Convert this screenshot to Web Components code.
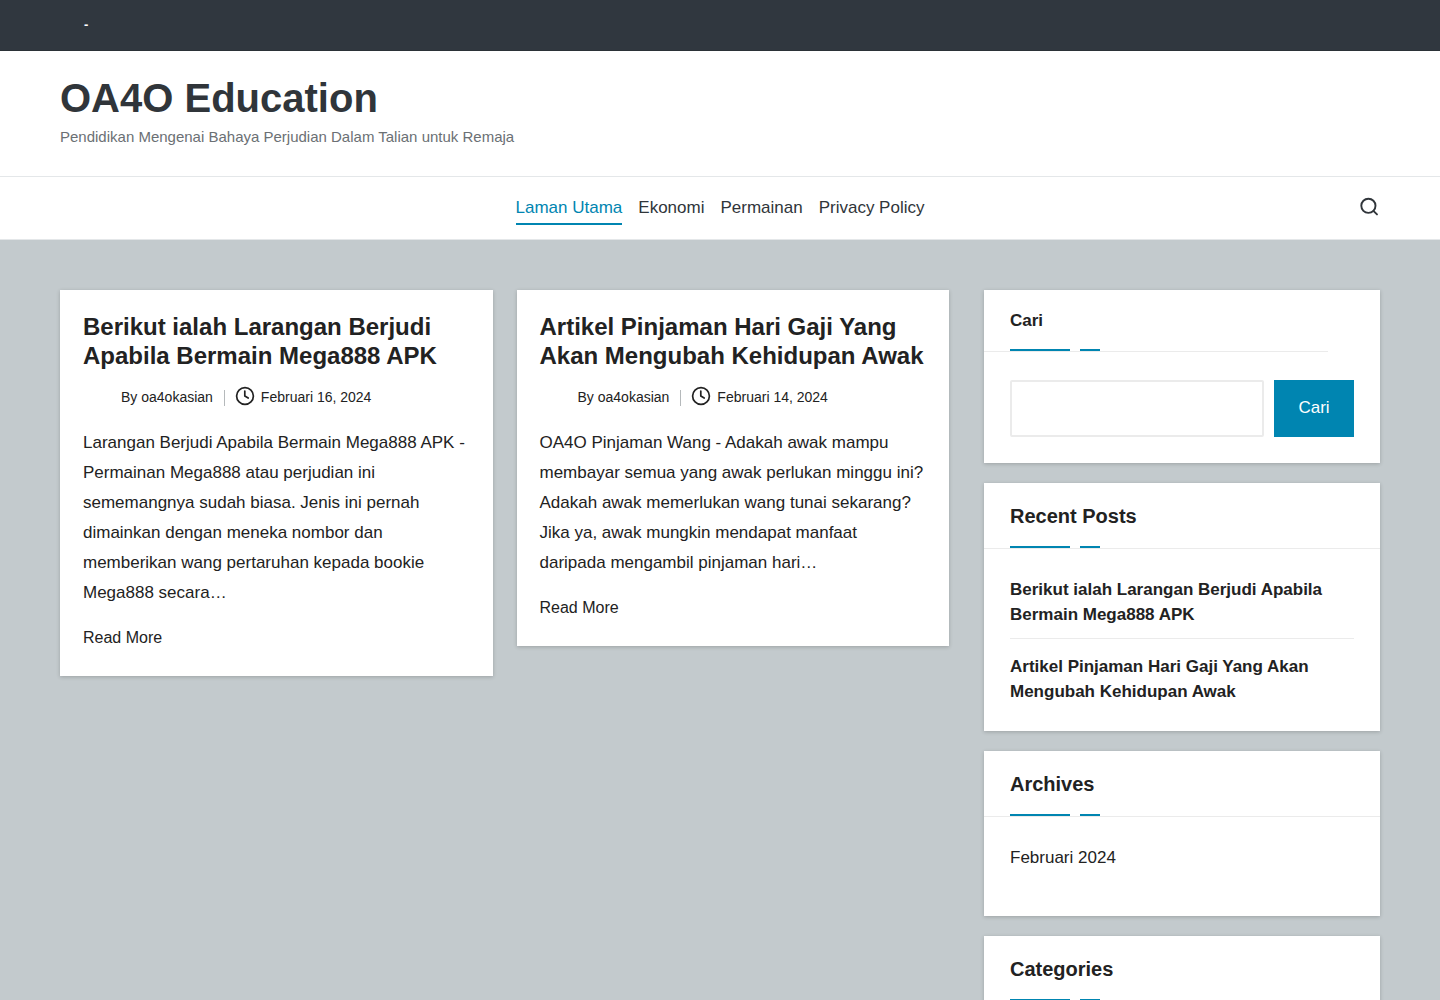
<!DOCTYPE html>
<html lang="ms">
<head>
<meta charset="utf-8">
<meta name="viewport" content="width=device-width, initial-scale=1">
<title>OA4O Education</title>
<style>
    :root {
        --accent: #0085b1;
        --text: #222;
        --heading: #30353a;
        --line: #e4e7e9;
        --shadow: 0 1px 4px rgba(0, 0, 0, .2);
    }
    body {
        margin: 0;
        background: #c3cacd;
        color: var(--text);
        font: 17px/30px "Liberation Sans", Arial, sans-serif;
    }
</style>
</head>
<body>

<site-topbar>-</site-topbar>

<site-header href="#">
    <span slot="name">OA4O Education</span>
    <span slot="tagline">Pendidikan Mengenai Bahaya Perjudian Dalam Talian untuk Remaja</span>
</site-header>

<site-nav>
    <a href="#" aria-current="page">Laman Utama</a>
    <a href="#ekonomi">Ekonomi</a>
    <a href="#permainan">Permainan</a>
    <a href="#privacy">Privacy Policy</a>
</site-nav>

<site-layout>
    <post-card href="#mega888" author="oa4okasian" date="Februari 16, 2024">
        <span slot="title">Berikut ialah Larangan Berjudi Apabila Bermain Mega888 APK</span>
        Larangan Berjudi Apabila Bermain Mega888 APK - Permainan Mega888 atau perjudian ini sememangnya sudah biasa. Jenis ini pernah dimainkan dengan meneka nombor dan memberikan wang pertaruhan kepada bookie Mega888 secara…
    </post-card>
    <post-card href="#pinjaman" author="oa4okasian" date="Februari 14, 2024">
        <span slot="title">Artikel Pinjaman Hari Gaji Yang Akan Mengubah Kehidupan Awak</span>
        OA4O Pinjaman Wang - Adakah awak mampu membayar semua yang awak perlukan minggu ini? Adakah awak memerlukan wang tunai sekarang? Jika ya, awak mungkin mendapat manfaat daripada mengambil pinjaman hari…
    </post-card>

    <search-widget slot="sidebar" label="Cari"></search-widget>
    <side-widget slot="sidebar">
        <span slot="title">Recent Posts</span>
        <link-list divided>
            <a href="#mega888">Berikut ialah Larangan Berjudi Apabila Bermain Mega888 APK</a>
            <a href="#pinjaman">Artikel Pinjaman Hari Gaji Yang Akan Mengubah Kehidupan Awak</a>
        </link-list>
    </side-widget>
    <side-widget slot="sidebar">
        <span slot="title">Archives</span>
        <link-list>
            <a href="#2024-02">Februari 2024</a>
        </link-list>
    </side-widget>
    <side-widget slot="sidebar">
        <span slot="title">Categories</span>
    </side-widget>
</site-layout>

<script>
// shared by every element below
const base = `
    * { box-sizing: border-box; }
    :host { display: block; }
    a { color: inherit; text-decoration: none; }
    .container { max-width: 1440px; margin: 0 auto; padding: 0 60px; }
`;

// heading of a sidebar box, with the two accent dashes over its rule
const widgetStyle = `
    :host {
        background: #fff;
        box-shadow: var(--shadow);
        padding-bottom: 26px;
    }
    .head {
        padding: 20px 26px 0;
        border-bottom: 1px solid #ebebeb;
        font-size: 20px;
        line-height: 26px;
        font-weight: bold;
    }
    h2, .head label {
        display: block;
        margin: 0;
        font: inherit;
    }
    .dashes {
        display: flex;
        gap: 10px;
        padding-top: 17px;
    }
    .dashes::before, .dashes::after {
        content: "";
        width: 60px;
        height: 2px;
        background: var(--accent);
    }
    .dashes::after { width: 20px; }
    .body { padding: 28px 26px 0; }
`;

class BaseElement extends HTMLElement {

    connectedCallback() {
        if (this.shadowRoot) {
            return;
        }
        this.attachShadow({mode: "open"}).innerHTML = `<style>${ base }${ this.styles }</style>${ this.render() }`;
    }

}

class SiteTopbar extends BaseElement {

    get styles() {
        return `
            :host {
                background: #30373f;
                border-bottom: 1px solid #2b3237;
                color: #fff;
                font-size: 13px;
                font-weight: bold;
                line-height: 50px;
            }
            .text { padding-left: 24px; }
        `;
    }

    render() {
        return `<div class="container"><div class="text"><slot></slot></div></div>`;
    }

}

class SiteHeader extends BaseElement {

    get styles() {
        return `
            :host {
                background: #fff;
                border-bottom: 1px solid var(--line);
            }
            .container { padding-top: 23px; padding-bottom: 24px; }
            h1 {
                margin: 0;
                color: var(--heading);
                font-size: 40px;
                line-height: 48px;
            }
            p {
                margin: 0;
                color: #6b7074;
                font-size: 15px;
            }
        `;
    }

    render() {
        return `
            <header class="container">
                <h1><a href="${ this.getAttribute("href") }"><slot name="name"></slot></a></h1>
                <p><slot name="tagline"></slot></p>
            </header>
        `;
    }

}

class SiteNav extends BaseElement {

    get styles() {
        return `
            :host {
                background: #fff;
                border-bottom: 1px solid var(--line);
            }
            .container {
                display: grid;
                grid-template-columns: 1fr auto 1fr;
                align-items: center;
                min-height: 62px;
            }
            nav {
                grid-column: 2;
                display: flex;
                gap: 16px;
                padding-top: 2px;
            }
            ::slotted(a) {
                border-bottom: 2px solid transparent;
                color: var(--heading);
                text-decoration: none;
            }
            ::slotted(a[aria-current]) {
                border-color: var(--accent);
                color: var(--accent);
            }
            button {
                justify-self: end;
                padding: 0;
                border: 0;
                background: none;
                color: var(--heading);
                cursor: pointer;
            }
            svg { display: block; }
        `;
    }

    render() {
        return `
            <div class="container">
                <nav><slot></slot></nav>
                <button type="button" aria-label="Cari">
                    <svg width="22" height="22" viewBox="0 0 22 22" fill="none" stroke="currentColor" stroke-width="1.9" stroke-linecap="round">
                        <circle cx="10.4" cy="8.8" r="7.1"/>
                        <path d="M15.4 13.8 19 17.4"/>
                    </svg>
                </button>
            </div>
        `;
    }

}

class SiteLayout extends BaseElement {

    get styles() {
        return `
            .container {
                display: flex;
                align-items: flex-start;
                gap: 35px;
                padding-top: 50px;
            }
            main {
                flex: 1;
                display: grid;
                grid-template-columns: 1fr 1fr;
                align-items: start;
                gap: 24px;
            }
            aside {
                flex: 0 0 30%;
                min-width: 0;
                display: flex;
                flex-direction: column;
                gap: 20px;
            }
            @media (max-width: 960px) {
                .container { flex-direction: column; align-items: stretch; }
                main { grid-template-columns: 1fr; }
            }
        `;
    }

    render() {
        return `
            <div class="container">
                <main><slot></slot></main>
                <aside><slot name="sidebar"></slot></aside>
            </div>
        `;
    }

}

class PostCard extends BaseElement {

    get styles() {
        return `
            :host {
                background: #fff;
                box-shadow: var(--shadow);
            }
            article { padding: 22px 23px 23px; }
            h2 {
                margin: 0;
                font-size: 24px;
                line-height: 29px;
            }
            .meta {
                display: flex;
                align-items: center;
                margin: 12px 0 16px;
                font-size: 14px;
            }
            .avatar {
                width: 30px;
                height: 30px;
                margin-right: 8px;
            }
            .author::after {
                content: "";
                display: inline-block;
                width: 1px;
                height: 16px;
                margin: 0 10px 0 11px;
                background: #b5b9bb;
                vertical-align: middle;
            }
            svg { margin: 0 6px 2px 0; }
            p { margin: 0 0 15px; }
            .more { font-size: 16px; display: block; }
        `;
    }

    render() {
        const href = this.getAttribute("href");
        return `
            <article>
                <h2><a href="${ href }"><slot name="title"></slot></a></h2>
                <div class="meta">
                    <span class="avatar"></span>
                    <span class="author">By <a href="#author">${ this.getAttribute("author") }</a></span>
                    <svg width="20" height="20" viewBox="0 0 20 20" fill="none" stroke="currentColor" stroke-width="1.7" stroke-linecap="round" stroke-linejoin="round" aria-hidden="true">
                        <circle cx="10" cy="10" r="8.4"/>
                        <path d="M9.8 5v5l3.4 2"/>
                    </svg>
                    <time>${ this.getAttribute("date") }</time>
                </div>
                <p><slot></slot></p>
                <a class="more" href="${ href }">Read More</a>
            </article>
        `;
    }

}

class SideWidget extends BaseElement {

    get styles() {
        return widgetStyle;
    }

    render() {
        return `
            <section>
                <div class="head"><h2><slot name="title"></slot></h2><div class="dashes"></div></div>
                <div class="body"><slot></slot></div>
            </section>
        `;
    }

}

class SearchWidget extends BaseElement {

    // the rule under the label is only as wide as the form
    get styles() {
        return `${ widgetStyle }
            .head {
                width: calc(100% - 52px);
                font-size: 17px;
                line-height: 22px;
            }
            .body {
                display: flex;
                gap: 10px;
            }
            input {
                flex: 1;
                min-width: 0;
                height: 57px;
                padding: 0 16px;
                border: 2px solid #ebebeb;
                border-radius: 2px;
                background: #fff;
                color: inherit;
                font: inherit;
            }
            button {
                width: 80px;
                padding: 0 0 2px;
                border: 0;
                background: var(--accent);
                color: #fff;
                font: inherit;
                cursor: pointer;
            }
        `;
    }

    render() {
        const label = this.getAttribute("label");
        return `
            <form role="search">
                <div class="head"><label for="q">${ label }</label><div class="dashes"></div></div>
                <div class="body">
                    <input id="q" type="search" name="s">
                    <button type="submit">${ label }</button>
                </div>
            </form>
        `;
    }

}

class LinkList extends BaseElement {

    get styles() {
        return `
            :host {
                line-height: 25px;
                padding-bottom: 20px;
            }
            :host([divided]) {
                font-weight: bold;
                padding-bottom: 1px;
            }
            ::slotted(a) {
                display: block;
                color: inherit;
                text-decoration: none;
            }
            ::slotted(a:not(:last-child)) {
                margin-bottom: 15px;
                padding-bottom: 11px;
                border-bottom: 1px solid #ebebeb;
            }
        `;
    }

    render() {
        return `<slot></slot>`;
    }

}

window.customElements.define("site-topbar", SiteTopbar);
window.customElements.define("site-header", SiteHeader);
window.customElements.define("site-nav", SiteNav);
window.customElements.define("site-layout", SiteLayout);
window.customElements.define("post-card", PostCard);
window.customElements.define("side-widget", SideWidget);
window.customElements.define("search-widget", SearchWidget);
window.customElements.define("link-list", LinkList);
</script>
</body>
</html>
